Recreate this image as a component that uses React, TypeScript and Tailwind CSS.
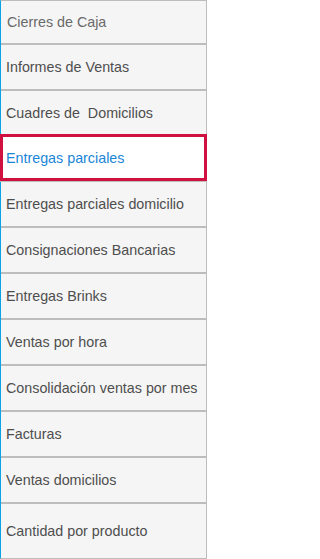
import React from "react";

const items = [
  "Cierres de Caja",
  "Informes de Ventas",
  "Cuadres de\u00a0 Domicilios",
  "Entregas parciales",
  "Entregas parciales domicilio",
  "Consignaciones Bancarias",
  "Entregas Brinks",
  "Ventas por hora",
  "Consolidación ventas por mes",
  "Facturas",
  "Ventas domicilios",
  "Cantidad por producto",
];

export default function App() {
  return (
    <div
      className="w-[207px] h-[559px] bg-[#f5f5f5] border-l border-l-[#0aa3e8] border-t border-r border-b border-t-[#bdbdbd] border-r-[#bdbdbd] border-b-[#bdbdbd] flex flex-col text-[14.3px] leading-none text-[#4e4e4e]"
      style={{ fontFamily: '"Liberation Sans", Arial, sans-serif' }}
    >
      {/* 1 */}
      <div className="h-[44px] shrink-0 flex items-center pt-px pl-[6px] text-[#6a6a6a] border-b-2 border-[#bdbdbd]">
        {items[0]}
      </div>
      {/* 2 */}
      <div className="h-[46px] shrink-0 flex items-center pt-px pl-[5px] border-b-2 border-[#bdbdbd]">
        {items[1]}
      </div>
      {/* 3 */}
      <div className="h-[43px] shrink-0 flex items-center pt-px pl-[5px]">
        {items[2]}
      </div>
      {/* 4 selected */}
      <div className="-ml-px -mr-px shrink-0 border-b border-[#bdbdbd]">
        <div className="h-[47px] bg-white border-[3px] border-[#d0103f] flex items-center pt-px pl-[3px] text-[#1a86d8]">
          {items[3]}
        </div>
      </div>
      {items.slice(4, 11).map((t) => (
        <div
          key={t}
          className="h-[46px] shrink-0 flex items-center pt-px pl-[5px] border-b-2 border-[#bdbdbd]"
        >
          {t}
        </div>
      ))}
      <div className="flex-1 flex items-center pt-px pl-[5px]">{items[11]}</div>
    </div>
  );
}
